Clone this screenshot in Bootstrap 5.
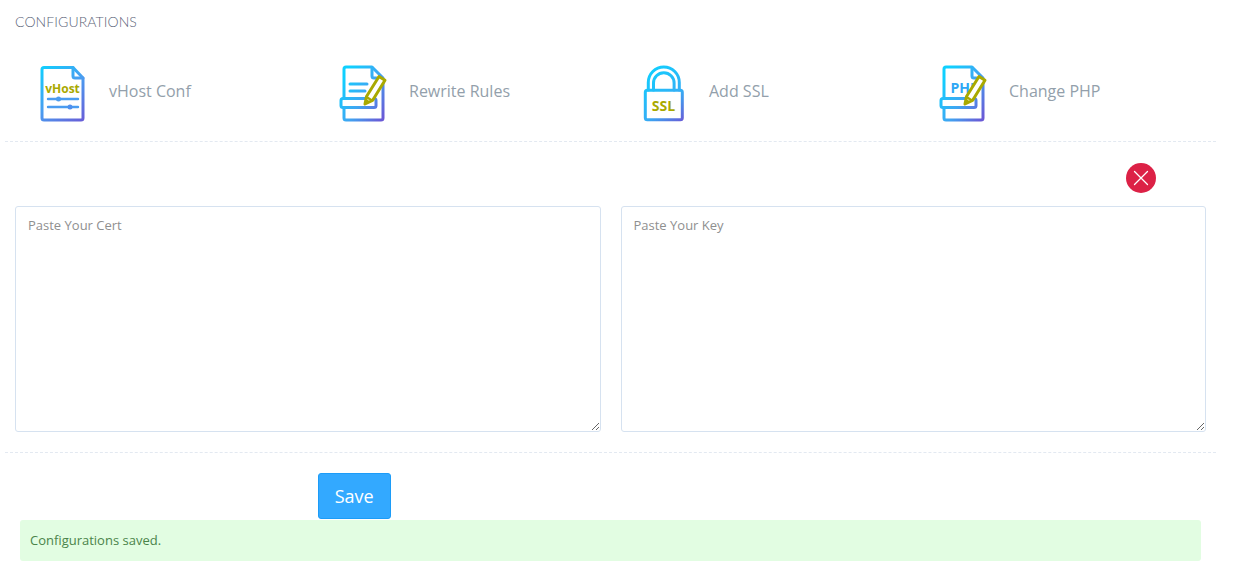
<!DOCTYPE html>
<html lang="en">
<head>
<meta charset="utf-8">
<title>Configurations</title>
<link href="https://cdn.jsdelivr.net/npm/bootstrap@5.3.0/dist/css/bootstrap.min.css" rel="stylesheet">
<style>
body{font-family:"Open Sans","Liberation Sans",sans-serif;background:#fff;overflow:hidden}
.cfg-main{padding:0 31px 0 15px}
.cfg-title{font-family:Lato,"Liberation Sans",sans-serif;font-weight:300;font-size:14px;line-height:20px;color:#5b6478;margin:0;padding-top:12px;height:63px;letter-spacing:.1px}
.cfg-tiles{width:1200px;height:60px}
.cfg-tile{flex:0 0 300px;padding-left:23px;gap:21px;color:#939fab;font-size:16px;text-decoration:none}
.cfg-tile span{margin-bottom:4px}
.cfg-tile svg{display:block;flex:none}
.cfg-g{--bs-gutter-x:20px;--bs-gutter-y:0}
.cfg-rule{margin-left:-10px;margin-right:-10px;border-bottom:1px dashed #e3e9f1}
.cfg-sep1{height:19px}
.cfg-closebar{height:64px;padding-left:1111px;padding-top:21px}
.cfg-close{width:30px;height:30px;border:0;padding:0;border-radius:50%;background:#dc2146;display:flex;align-items:center;justify-content:center}
.cfg-area{height:226px;font-size:13px;border:1px solid #d6e2f0;border-radius:3px;padding:9px 12px;color:#555}
.cfg-area::placeholder{color:#8f8f8f}
.cfg-sep2{height:21px}
.cfg-savebtn{background:#33a9ff;border:1px solid #1c9cf8;color:#fff;font-size:18px;line-height:24px;padding:10px 16px;height:46px;width:73px;border-radius:3px;margin-top:20px;display:block}
.cfg-alert{margin:1px 0 0 5px;width:1181px;height:41px;padding:0 10px;background:#e2fde2;color:#4a844a;border:0;border-radius:3px;font-size:13px;display:flex;align-items:center}
.ico-o{fill:none;stroke-width:3;stroke-linejoin:round;stroke-linecap:round}
.ico-t{font-family:"Open Sans","Liberation Sans",sans-serif;font-weight:700}
</style>
</head>
<body>
<main class="cfg-main">
  <h1 class="cfg-title">CONFIGURATIONS</h1>
  <div class="cfg-tiles d-flex">
    <a href="#" class="cfg-tile d-flex align-items-center">
      <svg width="50" height="60" viewBox="0 0 50 60">
        <defs><linearGradient id="g1" gradientUnits="userSpaceOnUse" x1="2" y1="4" x2="48" y2="58"><stop offset="0" stop-color="#0fd0ff"/><stop offset=".5" stop-color="#4a9cf0"/><stop offset="1" stop-color="#6a5ad6"/></linearGradient></defs>
        <g class="ico-o" stroke="url(#g1)">
          <path d="M35 4.500H6a2 2 0 0 0-2 2V55a2 2 0 0 0 2 2h37a2 2 0 0 0 2-2V15z"/>
          <path d="M35 4.500V13a2 2 0 0 0 2 2h8"/>
        </g>
        <path d="M10 36h30M10 44h30" stroke="#4a9cf0" stroke-width="2.400" stroke-linecap="round"/>
        <circle cx="20.500" cy="36" r="2.500" fill="#4a9cf0"/><circle cx="32" cy="44" r="2.500" fill="#4f90ee"/>
        <text class="ico-t" x="24.500" y="29.500" font-size="12" text-anchor="middle" fill="#a9a900">vHost</text>
      </svg>
      <span>vHost Conf</span>
    </a>
    <a href="#" class="cfg-tile d-flex align-items-center">
      <svg width="50" height="60" viewBox="0 0 50 60">
        <defs><linearGradient id="g2" gradientUnits="userSpaceOnUse" x1="2" y1="20" x2="48" y2="50"><stop offset="0" stop-color="#0fd0ff"/><stop offset=".5" stop-color="#3fa6f2"/><stop offset="1" stop-color="#6a5ad6"/></linearGradient></defs>
        <g class="ico-o" stroke="url(#g2)">
          <path d="M6 35V6a2 2 0 0 1 2-2h26l11 11V55a2 2 0 0 1-2 2H8a2 2 0 0 1-2-2V45"/>
          <path d="M34 4.500V13a2 2 0 0 0 2 2h3"/>
          <rect x="3" y="35.500" width="35" height="9" rx="2"/>
          <path d="M12 21h17M12 28h15"/>
        </g>
        <path d="M27 41l1.500-7.500L41 13.500l6 3.800L34.500 37.500z" fill="#fff" stroke="#a9a900" stroke-width="3" stroke-linejoin="round"/>
        <path d="M28.500 34l5.500 3.500" stroke="#a9a900" stroke-width="2.200"/>
        <path d="M27 41l1.300-5 3.800 2.500z" fill="#a9a900"/>
      </svg>
      <span>Rewrite Rules</span>
    </a>
    <a href="#" class="cfg-tile d-flex align-items-center">
      <svg width="50" height="60" viewBox="0 0 50 60">
        <defs><linearGradient id="g3" gradientUnits="userSpaceOnUse" x1="6" y1="10" x2="46" y2="58"><stop offset="0" stop-color="#0fd0ff"/><stop offset=".6" stop-color="#35aef5"/><stop offset="1" stop-color="#6a5ad6"/></linearGradient></defs>
        <g class="ico-o" stroke="url(#g3)">
          <rect x="7.300" y="27.300" width="37" height="29.500" rx="2"/>
          <path d="M10.300 27V19.500a15.500 15.500 0 0 1 31 0V27"/>
          <path d="M15.500 27V20a10.300 10.300 0 0 1 20.600 0V27"/>
        </g>
        <text class="ico-t" x="25.500" y="48" font-size="14" text-anchor="middle" fill="#a9a900">SSL</text>
      </svg>
      <span>Add SSL</span>
    </a>
    <a href="#" class="cfg-tile d-flex align-items-center">
      <svg width="50" height="60" viewBox="0 0 50 60">
        <defs><linearGradient id="g4" gradientUnits="userSpaceOnUse" x1="2" y1="20" x2="48" y2="50"><stop offset="0" stop-color="#0fd0ff"/><stop offset=".5" stop-color="#3fa6f2"/><stop offset="1" stop-color="#6a5ad6"/></linearGradient></defs>
        <g class="ico-o" stroke="url(#g4)">
          <path d="M6 35V6a2 2 0 0 1 2-2h26l11 11V55a2 2 0 0 1-2 2H8a2 2 0 0 1-2-2V45"/>
          <path d="M34 4.500V13a2 2 0 0 0 2 2h3"/>
          <rect x="3" y="35.500" width="35" height="9" rx="2"/>
        </g>
        <text class="ico-t" x="12.500" y="30" font-size="14" fill="#2ea7f5">PHP</text>
        <path d="M27 41l1.500-7.500L41 13.500l6 3.800L34.500 37.500z" fill="#fff" stroke="#a9a900" stroke-width="3" stroke-linejoin="round"/>
        <path d="M28.500 34l5.500 3.500" stroke="#a9a900" stroke-width="2.200"/>
        <path d="M27 41l1.300-5 3.800 2.500z" fill="#a9a900"/>
      </svg>
      <span>Change PHP</span>
    </a>
  </div>
  <div class="cfg-sep1 cfg-rule"></div>
  <div class="cfg-closebar">
    <button type="button" class="cfg-close" aria-label="Close">
      <svg width="16" height="16" viewBox="0 0 16 16"><path d="M1.500 1.500l13 13M14.500 1.500l-13 13" stroke="#fff" stroke-width="1.300" stroke-linecap="round"/></svg>
    </button>
  </div>
  <div class="row cfg-g">
    <div class="col-6"><textarea class="form-control cfg-area" placeholder="Paste Your Cert"></textarea></div>
    <div class="col-6"><textarea class="form-control cfg-area" placeholder="Paste Your Key"></textarea></div>
  </div>
  <div class="cfg-sep2 cfg-rule"></div>
  <div class="row cfg-g">
    <div class="col-3 offset-3"><button type="button" class="btn cfg-savebtn">Save</button></div>
  </div>
  <div class="alert alert-success cfg-alert mb-0" role="alert">Configurations saved.</div>
</main>
</body>
</html>
